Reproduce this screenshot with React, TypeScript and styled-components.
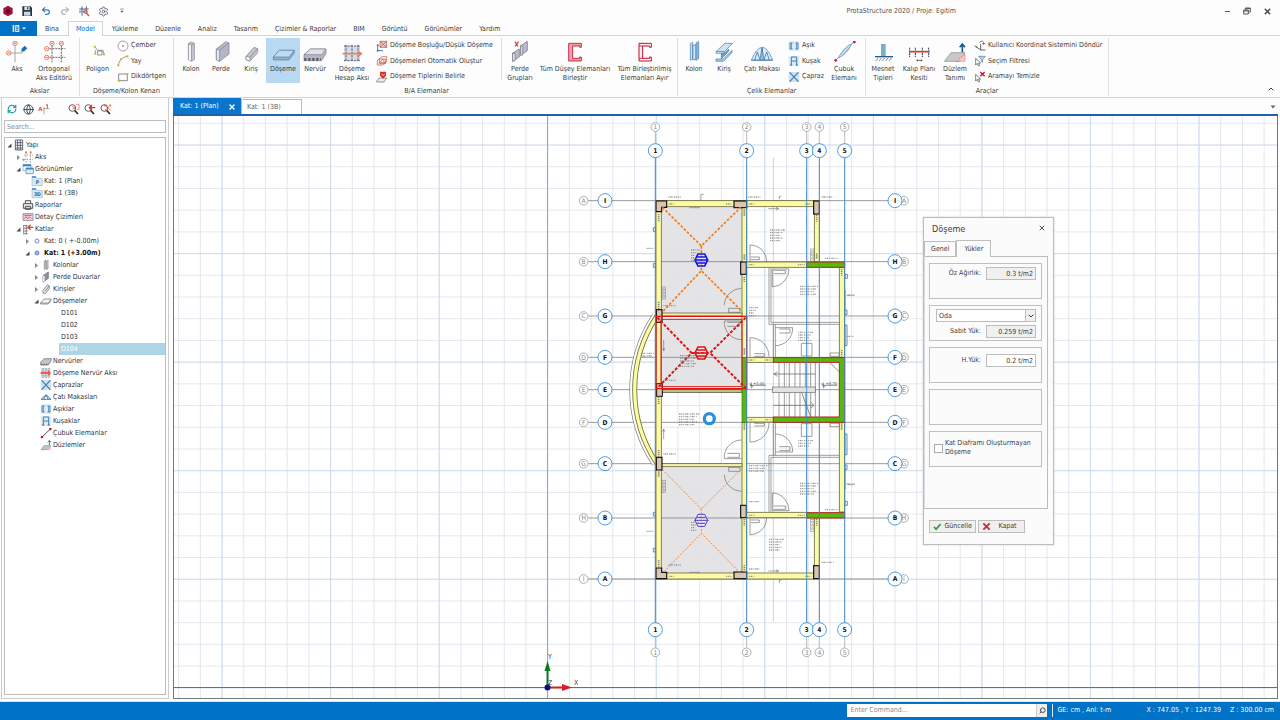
import React from 'react';
import styled, { createGlobalStyle, css } from 'styled-components';
import { Globe, Minus, Redo2, RefreshCw, Save, Search, Settings, Undo2, X, ChevronDown, ChevronUp, Copy } from 'lucide-react';

const BLUE = '#0072c6';
const RED = '#c8102e';
const STEEL = '#3f7bb0';

const GlobalStyle = createGlobalStyle`
  * { box-sizing: border-box; }
  body { margin: 0; background: #fff; }
  body, button, input, select {
    font-family: "DejaVu Sans Condensed", "DejaVu Sans", "Noto Sans", sans-serif;
    font-size: 7px;
    line-height: 9px;
    color: #3c3c3c;
  }
  button { border: 0; padding: 0; background: none; cursor: pointer; }
`;

const Page = styled.div`
  display: flex;
  flex-direction: column;
  min-height: 100vh;
  background: #fdfdfd;
`;

/* ---------- title bar ---------- */
const TitleBar = styled.header`
  display: flex;
  align-items: center;
  height: 21px;
  padding: 1px 6px 0 2px;
`;
const QuickBar = styled.div`
  display: flex;
  gap: 7px;
`;
const QuickButton = styled.button`
  display: grid;
  place-items: center;
  width: 12px;
  height: 12px;
`;
const WindowTitle = styled.h1`
  margin: 0 264px 0 auto;
  font-size: 7px;
  font-weight: 400;
  color: #555;
`;
const WindowButtons = styled.div`
  display: flex;
  gap: 6px;
`;
const WindowButton = styled.button`
  display: grid;
  place-items: center;
  width: 14px;
  height: 14px;
`;

/* ---------- ribbon ---------- */
const TabRow = styled.nav`
  display: flex;
  gap: 1px;
  height: 15px;
  border-bottom: 1px solid #d4d4d4;
`;
const FileButton = styled.button`
  display: flex;
  align-items: center;
  justify-content: center;
  gap: 2px;
  width: 37px;
  height: 15px;
  margin-right: -1px;
  background: ${BLUE};
`;
const RibbonTab = styled.button<{ $active?: boolean }>`
  height: 14px;
  padding: 3px 8px 0;
  ${(p) =>
    p.$active &&
    css`
      height: 15px;
      padding: 1px 7px 0;
      border: 1px solid #d4d4d4;
      border-bottom: 0;
      background: #fdfdfd;
      color: ${BLUE};
    `}
`;
const Ribbon = styled.div`
  position: relative;
  display: flex;
  height: 62px;
  padding: 2px 0 1px;
  border-bottom: 1px solid #d4d4d4;
`;
const Group = styled.section<{ $width: number; $indent?: number }>`
  display: flex;
  flex-direction: column;
  justify-content: space-between;
  width: ${(p) => p.$width}px;
  padding-left: ${(p) => p.$indent ?? 0}px;
  border-right: 1px solid #e0e0e0;
`;
const GroupBody = styled.div`
  display: flex;
  height: 45px;
`;
const GroupTitle = styled.h2`
  margin: 0;
  font-size: 7px;
  font-weight: 400;
  text-align: center;
`;
const ToolButton = styled.button<{ $width: number; $active?: boolean }>`
  display: flex;
  flex-direction: column;
  align-items: center;
  gap: 2px;
  width: ${(p) => p.$width}px;
  padding-top: 3px;
  white-space: pre;
  background: ${(p) => (p.$active ? '#b9d9f3' : 'none')};
`;
const ToolStack = styled.div`
  display: flex;
  flex-direction: column;
  justify-content: space-between;
  margin-left: 2px;
  padding-top: 1px;
`;
const StackButton = styled.button`
  display: flex;
  align-items: center;
  gap: 2px;
  height: 13px;
  white-space: nowrap;
`;
const Divider = styled.span`
  width: 1px;
  height: 42px;
  margin-left: auto;
  background: #e0e0e0;
`;
const CollapseButton = styled.button`
  margin: auto 5px 1px auto;
  height: 10px;
`;

/* ---------- work area ---------- */
const WorkArea = styled.main`
  display: flex;
  flex: 1;
  gap: 4px;
  padding: 0 2px 2px 1px;
`;
const SidePanel = styled.aside`
  display: flex;
  flex-direction: column;
  width: 168px;
  padding: 2px 2px 3px;
  border: 1px solid #ccc;
  border-top: 0;
`;
const SideTools = styled.div`
  display: flex;
  align-items: center;
  gap: 4px;
  height: 18px;
  margin-bottom: 2px;
  padding: 0 2px;
`;
const SideTool = styled.button<{ $first?: boolean }>`
  display: grid;
  place-items: center;
  width: 12px;
  height: 12px;
  margin-left: ${(p) => (p.$first ? 14 : 0)}px;
`;
const SearchBox = styled.input`
  width: 100%;
  height: 13px;
  padding: 0 2px;
  border: 1px solid #bdbdbd;
  &::placeholder { color: #8a8a8a; }
`;
const Tree = styled.ul`
  flex: 1;
  margin: 4px 0 0;
  padding: 1px 0 0;
  border: 1px solid #bdbdbd;
  background: #fff;
  list-style: none;
`;
const TreeRow = styled.li<{ $level: number }>`
  display: flex;
  align-items: center;
  height: 12px;
  padding-left: ${(p) => 1 + p.$level * 9}px;
`;
const TreeArrow = styled.span`
  display: grid;
  place-items: center;
  width: 7px;
`;
const TreeIcon = styled.span`
  display: grid;
  place-items: center;
  width: 12px;
`;
const TreeLabel = styled.span<{ $bold?: boolean; $selected?: boolean; $leaf?: boolean }>`
  padding-left: 1px;
  line-height: 12px;
  font-weight: ${(p) => (p.$bold ? 700 : 400)};
  color: ${(p) => (p.$bold ? '#111' : '#333')};
  ${(p) => p.$leaf && css`margin-left: 17px; padding-left: 2px; flex: 1;`}
  ${(p) => p.$selected && css`background: #add5e6; color: #fff;`}
`;

const Documents = styled.section`
  display: flex;
  flex: 1;
  flex-direction: column;
  min-width: 0;
`;
const DocumentTabs = styled.div`
  display: flex;
  align-items: flex-end;
  height: 18px;
  border-bottom: 2px solid #1f62ab;
`;
const DocumentTab = styled.button<{ $active?: boolean }>`
  display: flex;
  align-items: center;
  justify-content: space-between;
  width: ${(p) => (p.$active ? 68 : 61)}px;
  height: ${(p) => (p.$active ? 16 : 15)}px;
  padding: ${(p) => (p.$active ? '1px 5px 0 7px' : '1px 5px 0')};
  border: ${(p) => (p.$active ? 0 : '1px solid #bbb')};
  border-bottom: 0;
  background: ${(p) => (p.$active ? '#0a75cc' : '#fff')};
  color: ${(p) => (p.$active ? '#fff' : '#666')};
`;
const TabMenu = styled.button`
  width: 8px;
  height: 14px;
  margin-left: auto;
  margin-right: 1px;
`;
const Canvas = styled.div`
  position: relative;
  flex: 1;
  min-height: 583px;
  border: 1px solid #777;
  border-top: 0;
  background: #fff;
`;
const Drawing = styled.svg`
  position: absolute;
  inset: 0;
  width: 100%;
  height: 100%;
`;

/* ---------- slab dialog ---------- */
const Dialog = styled.section`
  position: absolute;
  left: 749px;
  top: 101px;
  width: 131px;
  padding-bottom: 11px;
  border: 1px solid #bdbdbd;
  background: #fbfbfb;
  box-shadow: 0 0 2px #ccc;
`;
const DialogHeader = styled.header`
  display: flex;
  align-items: center;
  justify-content: space-between;
  height: 22px;
  padding: 0 7px 0 8px;
`;
const DialogTitle = styled.h2`
  margin: 0;
  font-size: 9px;
  font-weight: 400;
`;
const DialogTabs = styled.div`
  display: flex;
  align-items: flex-end;
`;
const DialogTab = styled.button<{ $active?: boolean }>`
  height: ${(p) => (p.$active ? 17 : 15)}px;
  padding: ${(p) => (p.$active ? '0 7px' : '1px 6px 0')};
  margin-bottom: ${(p) => (p.$active ? -1 : 0)}px;
  border: 1px solid #bdbdbd;
  border-bottom: 0;
  background: #fbfbfb;
`;
const DialogPage = styled.div`
  display: grid;
  align-content: start;
  gap: 6px;
  height: 253px;
  margin-right: 5px;
  padding: 6px 5px 6px 4px;
  border: 1px solid #bdbdbd;
  border-left-color: #ddd;
`;
const GroupBox = styled.div`
  display: grid;
  align-content: start;
  gap: 3px;
  height: 36px;
  padding: 3px 5px 0 6px;
  border: 1px solid #c0c0c0;
`;
const Field = styled.label`
  display: flex;
  align-items: center;
  justify-content: flex-end;
  gap: 5px;
`;
const SpacedField = styled(Field)`
  padding-top: 3px;
`;
const ValueInput = styled.input<{ $locked?: boolean }>`
  width: 50px;
  height: 13px;
  padding: 0 2px;
  border: 1px solid #bdbdbd;
  background: ${(p) => (p.$locked ? '#f0f0f0' : '#fff')};
  text-align: right;
`;
const SelectShell = styled.div`
  position: relative;
  height: 13px;
`;
const UsageSelect = styled.select`
  appearance: none;
  display: block;
  width: 100%;
  height: 13px;
  padding: 1px 2px 0;
  border: 1px solid #bdbdbd;
  border-radius: 0;
  background: #fff;
`;
const SelectArrow = styled.span`
  position: absolute;
  inset: 0 0 0 auto;
  display: grid;
  place-items: center;
  width: 11px;
  border: 1px solid #bdbdbd;
  background: #f0f0f0;
  pointer-events: none;
`;
const CheckRow = styled.label`
  display: flex;
  align-items: center;
  gap: 2px;
  margin-left: -2px;
  padding-top: 4px;
`;
const CheckBox = styled.input`
  appearance: none;
  flex: none;
  width: 9px;
  height: 9px;
  margin: 0;
  border: 1px solid #aaa;
  background: #fff;
`;
const DialogActions = styled.div`
  display: flex;
  gap: 2px;
  padding: 11px 5px 0;
`;
const ActionButton = styled.button`
  display: flex;
  align-items: center;
  gap: 3px;
  width: 47px;
  height: 13px;
  padding: 0 3px;
  border: 1px solid #bdbdbd;
  background: #efefef;
`;
const ActionText = styled.span`
  flex: 1;
  text-align: center;
`;

/* ---------- status bar ---------- */
const StatusBar = styled.footer`
  display: flex;
  align-items: center;
  justify-content: flex-end;
  height: 19px;
  padding: 0 6px 1px 0;
  border-top: 1px solid #d7e8f6;
  background: ${BLUE};
  color: #fff;
`;
const CommandBox = styled.div`
  display: flex;
  width: 200px;
  height: 13px;
  background: #fff;
`;
const CommandInput = styled.input`
  flex: 1;
  padding: 0 3px;
  border: 0;
  &::placeholder { color: #8a8a8a; }
`;
const CommandButton = styled.button`
  display: grid;
  place-items: center;
  width: 11px;
  background: #eee;
  border-left: 1px solid #ccc;
  svg { transform: scaleX(-1); }
`;
const Units = styled.span`
  width: 85px;
  margin-left: 5px;
  padding-left: 4px;
  border-left: 1px solid #d7e8f6;
  line-height: 13px;
`;
const Coordinate = styled.span`
  margin-left: 9px;
`;
const TaskStrip = styled.div`
  display: flex;
  height: 1px;
  padding-left: 32px;
  background: #12335c;
`;
const TaskItem = styled.span<{ $width: number; $after?: number; $tone: string }>`
  width: ${(p) => p.$width}px;
  margin-right: ${(p) => p.$after ?? 0}px;
  background: ${(p) => p.$tone};
`;

/* ---------- icons ---------- */
type Art = { children: React.ReactNode };
const Big = ({ children }: Art) => (
  <svg width="24" height="22" viewBox="0 0 72 66" fill="none" strokeWidth="2" aria-hidden="true">{children}</svg>
);
const Small = ({ children }: Art) => (
  <svg width="12" height="12" viewBox="0 0 36 36" fill="none" strokeWidth="2" aria-hidden="true">{children}</svg>
);

const bubble = (x: number, y: number) => (
  <g key={`${x}-${y}`} stroke="#d9532f" strokeWidth="2.2"><circle cx={x} cy={y} r="6.5" /><path d={`M${x - 3} ${y + 2}l3-4 3 4`} /></g>
);
const AxisIcon = () => (
  <Big>
    <path d="M30 14v50M18 36h36" stroke="#a8a8a8" strokeWidth="3" />
    {bubble(30, 7)}{bubble(11, 36)}
    <path d="M47 34l3-11 9-9 8 8-9 9z" fill="#1f6db5" /><path d="M47 34l2-7 5 5z" fill="#e9b44c" />
  </Big>
);
const OrthoIcon = () => (
  <Big>
    <path d="M30 14v50M58 14v50M22 23h48M22 49h48" stroke="#444" strokeWidth="2.5" strokeDasharray="6 3" />
    {bubble(30, 7)}{bubble(58, 7)}{bubble(14, 23)}{bubble(14, 49)}
  </Big>
);
const node = (x: number, y: number) => <rect key={`${x}-${y}`} x={x - 3} y={y - 3} width="6" height="6" fill="#d8b32b" />;
const PolygonIcon = () => (
  <Big>
    <path d="M26 17l9 11 16 0 3 12M35 30h13v12H35zM28 40v-12" stroke="#666" />
    {node(26, 17)}{node(28, 38)}{node(54, 40)}
  </Big>
);
const ColumnIcon = () => (
  <Big><path d="M28 8l8-5 10 4v48l-8 6-10-5z" fill="#c9ccd8" stroke="#7a7d8c" /><path d="M33 12v46" stroke="#f4f4f8" strokeWidth="6" /><path d="M28 8l10 4 8-5M38 12v48" stroke="#7a7d8c" /></Big>
);
const WallIcon = () => (
  <Big><path d="M22 24L50 2l10 4v33L32 61l-10-5z" fill="#b4b7c6" stroke="#7a7d8c" /><path d="M22 24l10 4v33l-10-5z" fill="#e4e5ec" stroke="#7a7d8c" /><path d="M32 28L60 6" stroke="#7a7d8c" /></Big>
);
const BeamIcon = () => (
  <Big><path d="M21 46l24-27 11 4v12L33 60l-12-4z" fill="#c0c3d0" stroke="#7a7d8c" /><path d="M21 46l12 3v11l-12-4z" fill="#fff" stroke="#7a7d8c" /><path d="M33 49l23-26" stroke="#7a7d8c" /></Big>
);
const SlabIcon = () => (
  <Big><path d="M7 48l18-20h45v8L54 57H7z" fill="#8fb2d0" stroke="#5f7d98" /><path d="M7 48l18-20h45L54 48z" fill="#bcdcf0" stroke="#5f7d98" /></Big>
);
const RibIcon = () => (
  <Big><path d="M3 41l19-17h47v13L56 59H3z" fill="#b2b5c3" stroke="#7a7d8c" /><path d="M3 41l19-17h47L56 41z" fill="#dfe0e8" stroke="#7a7d8c" /><path d="M4 55h50" stroke="#4c4f5c" strokeWidth="8" strokeDasharray="6 6" /></Big>
);
const RibAxisIcon = () => (
  <Big><path d="M12 15h48v44H12z" fill="#d5dbe8" /><path d="M12 15h48M12 59h48M18 12v50M36 12v50M54 12v50" stroke="#51607a" strokeWidth="3" strokeDasharray="7 3" /><path d="M8 38h54" stroke="#ef7d4f" strokeWidth="5" /><path d="M56 29l12 9-12 9z" fill="#ef7d4f" /></Big>
);
const WallGroupIcon = () => (
  <Big><path d="M38 14L58 1v28L38 43z" fill="#b9bccb" stroke="#6a6d7c" /><path d="M38 14l6 2v26l-6 1z" fill="#eee" stroke="#6a6d7c" /><path d="M14 36l20-12v24L14 61z" fill="#b9bccb" stroke="#6a6d7c" /><path d="M14 36l7 2v21l-7 2z" fill="#eee" stroke="#6a6d7c" /><path d="M21 2l9 14M32 2L21 16" stroke="#e03a1e" strokeWidth="3.5" /></Big>
);
const MergeIcon = () => (
  <Big><path d="M17 7h38v12h-5v-4H29v37h21v-4h5v12H17z" fill="#e7a3ae" stroke={RED} strokeWidth="2.5" /></Big>
);
const SplitIcon = () => (
  <Big><path d="M18 7h37v12h-5v-4H29v37h21v-4h5v12H18z" fill="#fbeef0" stroke={RED} strokeWidth="3" /><path d="M18 15h11M18 52h11" stroke={RED} strokeWidth="2.5" /></Big>
);
const SteelColumnIcon = () => (
  <Big><path d="M25 8l7-4v50l-7 4zM32 12h10v44H32z" fill="#cfe2f2" stroke={STEEL} /><path d="M42 6l8-4v50l-8 6z" fill="#8fb9d9" stroke={STEEL} /></Big>
);
const SteelBeamIcon = () => (
  <Big>
    <path d="M12 32L38 7h24L37 32z" fill="#cfe2f2" stroke={STEEL} />
    <path d="M12 32h25v5H12z" fill="#eef6fc" stroke={STEEL} />
    <path d="M28 37v16l22-22V24L37 37z" fill="#6a9cc6" stroke={STEEL} />
    <path d="M12 54h22L60 28v7L34 61H12z" fill="#a9cbe5" stroke={STEEL} />
  </Big>
);
const TrussIcon = () => (
  <Big><path d="M4 57Q20 20 36 19t32 38z" fill="#dceaf6" stroke={STEEL} /><path d="M4 58h64M36 20v38M14 57l8-24 8 24 6-36 6 36 8-24 8 24" stroke={STEEL} strokeWidth="2.5" /></Big>
);
const RodIcon = () => (
  <Big><path d="M13 56L66 2" stroke={STEEL} strokeWidth="2.5" /><path d="M20 50C26 36 44 14 57 10 54 24 36 44 20 50z" fill="#a9cbe5" stroke={STEEL} /><path d="M24 46L54 13" stroke="#e6f1fa" strokeWidth="3" /><circle cx="11" cy="58" r="4" fill={RED} /><circle cx="67" cy="3" r="4" fill={RED} /></Big>
);
const SupportIcon = () => (
  <Big><path d="M30 9h14v36H30z" fill="#79adcf" /><path d="M12 47h54" stroke="#1f5f91" strokeWidth="4" /><path d="M14 60l8-10M24 60l8-10M34 60l8-10M44 60l8-10M54 60l8-10" stroke="#555" /></Big>
);
const FormworkIcon = () => (
  <Big><path d="M8 20v28M25 20v28M46 20v28M65 20v28" stroke="#1f3f70" strokeWidth="3" strokeDasharray="6 2" /><path d="M6 32h62" stroke="#e03a1e" strokeWidth="5" /><path d="M28 58h18M31 55v6M43 55v6" stroke="#333" /></Big>
);
const PlaneIcon = () => (
  <Big><path d="M4 61l20-26h42L52 61z" fill="#c9c9cc" stroke="#888" /><path d="M40 61l26-22v22z" fill="#f7c8bf" stroke="#e03a1e" strokeDasharray="3 3" /><path d="M58 34V12M50 19l8-10 8 10" stroke="#155a94" strokeWidth="5" /></Big>
);

const CircleIcon = () => <Small><circle cx="18" cy="18" r="15" stroke="#777" /><circle cx="18" cy="18" r="2.5" fill={RED} /></Small>;
const ArcIcon = () => <Small><path d="M4 32C6 16 16 6 32 4" stroke="#666" />{node(4, 31)}{node(31, 4)}{node(12, 13)}</Small>;
const RectIcon = () => <Small><path d="M5 9h26v20H5z" stroke="#555" />{node(5, 29)}{node(31, 9)}</Small>;
const OpeningIcon = () => <Small><path d="M12 4h20v18H12z" fill="#f2cfc8" stroke="#8a5a52" /><path d="M12 4l20 18M32 4L12 22" stroke="#c0392b" /><path d="M5 16v16h16" stroke={STEEL} strokeWidth="3" /><circle cx="5" cy="16" r="3" fill={STEEL} /><circle cx="5" cy="32" r="3" fill={STEEL} /></Small>;
const AutoSlabIcon = () => <Small><path d="M4 16L18 5h14v14L20 30H4z" stroke="#d9432f" /><path d="M10 12h18v14H10z" stroke="#7a4a44" /><path d="M12 22l8-9 6 10z" stroke="#d9432f" /></Small>;
const SlabTypeIcon = () => <Small><path d="M2 30l8-9h22l-8 12H2z" fill="#e9e9ee" stroke="#666" /><path d="M12 2h18v12l-9 9-9-9z" fill="#d9301f" /><path d="M16 8l5 6 5-6" stroke="#fff" /></Small>;
const PurlinIcon = () => <Small><path d="M2 3h32v30H2z" fill="#dcebf6" /><path d="M14 9H6v18h8M22 9h8v18h-8M10 9v18M26 9v18" stroke={STEEL} strokeWidth="2.5" /></Small>;
const GirtIcon = () => <Small><path d="M2 3h32v30H2z" fill="#dcebf6" /><path d="M10 31V6h16v25M10 18h16M6 30h7M23 30h7" stroke={STEEL} strokeWidth="3" /></Small>;
const BraceIcon = () => <Small><path d="M2 3h32v30H2z" fill="#cfe2f1" /><path d="M5 4l26 28M31 4L5 32" stroke={STEEL} strokeWidth="3.5" /></Small>;
const RotateUcsIcon = () => <Small><path d="M20 12v18H34M20 30L6 20" stroke="#444" strokeWidth="2.5" /><path d="M2 16l4 6 4-2" stroke="#444" /><path d="M17 8c2-6 12-6 12 2" stroke="#e03a1e" strokeWidth="3" /><path d="M24 9h10l-5 6z" fill="#e03a1e" /></Small>;
const cursor = <path d="M5 10v20l5-5 3 8 4-2-3-7h6z" fill="#fff" stroke="#444" />;
const FilterIcon = () => <Small>{cursor}<path d="M14 4h20l-8 9v9l-4-3v-6z" fill="#bcd8ee" stroke={STEEL} /></Small>;
const ClearIcon = () => <Small>{cursor}<path d="M19 3l13 13M32 3L19 16" stroke={RED} strokeWidth="4" /></Small>;

const BuildingIcon = () => <Small><path d="M7 3h22v30H7zM14 3v30M22 3v30M7 11h22M7 19h22M7 27h22" stroke="#444c5c" strokeWidth="2.5" /></Small>;
const GridTreeIcon = () => <Small><path d="M6 12h26M6 26h26M12 6v28M26 6v28" stroke="#666" strokeDasharray="4 4" /><circle cx="12" cy="4" r="3" fill="#e07a50" /><circle cx="26" cy="4" r="3" fill="#e07a50" /><circle cx="4" cy="26" r="3" fill="#e07a50" /></Small>;
const ViewsIcon = () => <Small><path d="M3 5h24v18H3z" fill="#fff" stroke="#5ba3d0" /><path d="M3 7h24" stroke="#3489c4" strokeWidth="6" /><path d="M12 15h22v17H12z" fill="#dcecf7" stroke="#3489c4" /><path d="M12 17h22" stroke="#3489c4" strokeWidth="5" /></Small>;
const ViewIcon = ({ mark }: { mark: string }) => <Small><path d="M3 5h12l3 5h16v22H3z" fill="#d6e6f2" stroke="#9fbdd3" /><path d="M3 6h12" stroke="#2a80c0" strokeWidth="4" /><text x="19" y="28" fontSize="15" fontWeight="700" textAnchor="middle" fill="#2a6aa0">{mark}</text></Small>;
const PrinterIcon = () => <Small><path d="M10 14V5h16v9M4 14h28v14H4zM10 22h16v9H10z" fill="#eee" stroke="#555" strokeWidth="3" /></Small>;
const DetailIcon = () => <Small><path d="M3 8h30v20H3z" fill="#f4dcdc" stroke="#667" /><path d="M7 23l5-6 5 6 5-6 6 6M7 13h22" stroke={RED} /></Small>;
const StoreysIcon = () => <Small><path d="M5 6v28M13 6v28M5 8h12M5 16h12M5 24h12M5 32h12" stroke="#555" /><path d="M34 13H22M26 6l-8 7 8 7" stroke="#e03a1e" strokeWidth="4" /></Small>;
const DotIcon = ({ full }: { full?: boolean }) => <Small><circle cx="18" cy="18" r="6" stroke="#6f86d6" strokeWidth="3" fill={full ? '#9fb0ea' : '#fff'} /></Small>;
const MiniColumn = () => <Small><path d="M13 6l4-3v26l-4 3zM20 6l4-3v26l-4 3z" fill="#e4e5ea" stroke="#777" /></Small>;
const MiniWall = () => <Small><path d="M9 14L25 3v19L9 34z" fill="#8d90a2" stroke="#5c5f70" /><path d="M9 14l5 2v15l-5 3z" fill="#e8e8ee" /></Small>;
const MiniBeam = () => <Small><path d="M9 22L22 5l6 3v9L16 32l-7-2z" fill="#dddfe6" stroke="#6a6d7c" /><path d="M16 24L27 9" stroke="#6a6d7c" /></Small>;
const MiniSlab = () => <Small><path d="M2 24l10-12h22L25 24zM2 24v3h23l9-12" fill="#f4f4f6" stroke="#666" /></Small>;
const MiniRib = () => <Small><path d="M2 22l10-11h22v5L25 30H2z" fill="#c2c4ce" stroke="#666" /><path d="M4 28h20" stroke="#555" strokeWidth="3" strokeDasharray="4 3" /></Small>;
const MiniRibAxis = () => <Small><path d="M3 4h28v28H3z" fill="#cdd6e4" /><path d="M9 3v30M18 3v30M27 3v30" stroke="#51607a" strokeDasharray="4 3" /><path d="M2 18h24" stroke="#ef5f3f" strokeWidth="6" /><path d="M24 10l10 8-10 8z" fill="#ef5f3f" /></Small>;
const MiniTruss = () => <Small><path d="M3 25L18 11l15 14zM11 25l7-13 7 13" stroke={STEEL} strokeWidth="3" /></Small>;
const MiniRod = () => <Small><path d="M6 30L30 7" stroke="#555" strokeWidth="3" /><circle cx="6" cy="30" r="4" fill={RED} /><circle cx="31" cy="6" r="4" fill={RED} /></Small>;
const MiniPlane = () => <Small><path d="M3 32l9-12h20l-6 12z" fill="#c4c4c8" stroke="#888" /><path d="M18 32l14-10v10z" fill="#f4b7aa" /><path d="M28 19V6M23 10l5-6 5 6" stroke={STEEL} strokeWidth="3" /></Small>;
const ZoomTool = ({ mark }: { mark: React.ReactNode }) => <Small><circle cx="13" cy="15" r="10" stroke="#444" strokeWidth="2.5" /><path d="M20 22l10 11" stroke="#333" strokeWidth="5" />{mark}</Small>;

/* ---------- data ---------- */
type Item = { level: number; label: string; icon?: React.ReactNode; arrow?: 'open' | 'closed'; bold?: boolean; selected?: boolean };
const tree: Item[] = [
  { level: 0, label: 'Yapı', icon: <BuildingIcon />, arrow: 'open' },
  { level: 1, label: 'Aks', icon: <GridTreeIcon />, arrow: 'closed' },
  { level: 1, label: 'Görünümler', icon: <ViewsIcon />, arrow: 'open' },
  { level: 2, label: 'Kat: 1 (Plan)', icon: <ViewIcon mark="P" /> },
  { level: 2, label: 'Kat: 1 (3B)', icon: <ViewIcon mark="3D" /> },
  { level: 1, label: 'Raporlar', icon: <PrinterIcon /> },
  { level: 1, label: 'Detay Çizimleri', icon: <DetailIcon /> },
  { level: 1, label: 'Katlar', icon: <StoreysIcon />, arrow: 'open' },
  { level: 2, label: 'Kat: 0 ( +-0.00m)', icon: <DotIcon />, arrow: 'closed' },
  { level: 2, label: 'Kat: 1 (+3.00m)', icon: <DotIcon full />, arrow: 'open', bold: true },
  { level: 3, label: 'Kolonlar', icon: <MiniColumn />, arrow: 'closed' },
  { level: 3, label: 'Perde Duvarlar', icon: <MiniWall />, arrow: 'closed' },
  { level: 3, label: 'Kirişler', icon: <MiniBeam />, arrow: 'closed' },
  { level: 3, label: 'Döşemeler', icon: <MiniSlab />, arrow: 'open' },
  { level: 4, label: 'D101' },
  { level: 4, label: 'D102' },
  { level: 4, label: 'D103' },
  { level: 4, label: 'D104', selected: true },
  { level: 3, label: 'Nervürler', icon: <MiniRib /> },
  { level: 3, label: 'Döşeme Nervür Aksı', icon: <MiniRibAxis /> },
  { level: 3, label: 'Çaprazlar', icon: <BraceIcon /> },
  { level: 3, label: 'Çatı Makasları', icon: <MiniTruss /> },
  { level: 3, label: 'Aşıklar', icon: <PurlinIcon /> },
  { level: 3, label: 'Kuşaklar', icon: <GirtIcon /> },
  { level: 3, label: 'Çubuk Elemanlar', icon: <MiniRod /> },
  { level: 3, label: 'Düzlemler', icon: <MiniPlane /> },
];
const ribbonTabs = ['Bina', 'Model', 'Yükleme', 'Düzenle', 'Analiz', 'Tasarım', 'Çizimler & Raporlar', 'BIM', 'Görüntü', 'Görünümler', 'Yardım'];

const Tool = ({ width, label, active, children }: { width: number; label: string; active?: boolean; children: React.ReactNode }) => (
  <ToolButton $width={width} $active={active}>{children}<span>{label}</span></ToolButton>
);
const Stacked = ({ label, children }: { label: string; children: React.ReactNode }) => (
  <StackButton>{children}<span>{label}</span></StackButton>
);

/* ---------- floor plan; three drawing units to a pixel ---------- */
const columns: [string, number][] = [['1', 256], ['2', 530], ['3', 710], ['4', 748], ['5', 824]];
const rows: [string, string, number][] = [
  ['I', 'A', 257], ['H', 'B', 440], ['G', 'C', 603], ['F', 'D', 727], ['E', 'E', 824], ['D', 'F', 922], ['C', 'G', 1046], ['B', 'H', 1209], ['A', 'I', 1392],
];
const MIRROR = 'translate(0 1649) scale(1 -1)';

const Bubble = ({ x, y, text }: { x: number; y: number; text: string }) => (
  <g>
    <circle cx={x} cy={y} r="21" fill="#fff" fillOpacity="0.85" stroke="#2a8ad8" strokeWidth="2.5" />
    <text x={x} y={y + 7} fontSize="20" fontWeight="700" textAnchor="middle" fill="#111">{text}</text>
  </g>
);
const Ghost = ({ x, y, text }: { x: number; y: number; text: string }) => (
  <g>
    <circle cx={x} cy={y} r="13" fill="#fff" stroke="#8a8a8a" strokeWidth="2" />
    <text x={x} y={y + 7} fontSize="20" textAnchor="middle" fill="#888">{text}</text>
  </g>
);
const Scribble = ({ x, y, w, n = 1 }: { x: number; y: number; w: number; n?: number }) => (
  <path
    d={Array.from({ length: n }, (_, i) => `M${x} ${y + i * 8}h${w - ((i * 7) % 15)}`).join('')}
    stroke="#7d7d7d" strokeWidth="4" strokeDasharray="3 2 5 2 2 3" opacity="0.75"
  />
);
const Shaft = ({ x, y }: { x: number; y: number }) => (
  <g stroke="#777" strokeWidth="1.5"><rect x={x} y={y} width="10" height="36" /><circle cx={x + 5} cy={y + 8} r="3" /><circle cx={x + 5} cy={y + 18} r="3" /><circle cx={x + 5} cy={y + 28} r="3" /></g>
);
const HalfLines = () => (
  <g stroke="#6c6c6c" strokeWidth="2">
    <path d="M540 390v52M540 390a50 50 0 0 1 50 50M542 434h26v-8h-26M597 458v170M603 458v164M597 628h211M603 622h205M610 628v99M616 628v99" />
    <path d="M657 462a52 52 0 0 1-50 53M657 462h-50v53M612 466h34v10h-34M463 570a52 52 0 0 1 51-50M476 592h34v-12h-34z" />
    <path d="M463 618a52 52 0 0 0 51 56M463 618h51M472 622h36v12h-36M668 638a52 52 0 0 1-52 54M668 638h-52M628 642h32v12h-32" />
    <path d="M540 668v57M540 668a56 56 0 0 1 57 57M553 716h30v8h-30M694 685h32v38h-32zM780 714h28v10h-28z" />
    <path d="M228 400h22M832 540h20M826 525v60" strokeWidth="1.5" />
    <path d="M250 338h7v11h-7zM250 446h7v11h-7zM825 478h7v12h-7zM825 585h6v14h-6zM825 630h6v62h-6z" stroke={STEEL} strokeWidth="2.5" />
  </g>
);
const Walls = () => (
  <g stroke="#6e6e3c" strokeWidth="2.5" fill="#fbfba6">
    <rect x="258" y="257" width="474" height="18" />
    <rect x="258" y="257" width="16" height="570" />
    <rect x="516" y="257" width="14" height="470" />
    <rect x="733" y="258" width="15" height="182" />
    <rect x="530" y="441" width="180" height="16" />
    <rect x="808" y="458" width="16" height="270" />
    <rect x="530" y="728" width="80" height="14" />
    <rect x="274" y="594" width="242" height="9" fill="#f3f3b4" />
  </g>
);
const Columns = () => (
  <g stroke="#111" strokeWidth="3.5" fill="#dcc4b0">
    <path d="M258 258h32v19h-15v13h-17z" />
    <rect x="492" y="258" width="38" height="20" />
    <rect x="731" y="258" width="17" height="39" />
    <rect x="512" y="441" width="17" height="37" />
    <rect x="259" y="584" width="17" height="38" />
  </g>
);
const Seal = ({ y, color, width }: { y: number; color: string; width: number }) => (
  <path d={`M375 ${y}l9-18h20l9 18-9 18h-20zM373 ${y}h42M382 ${y - 9}h24M382 ${y + 9}h24`} stroke={color} strokeWidth={width} fill="#fff" fillOpacity="0.3" />
);

const FloorPlan = () => (
  <Drawing fill="none" role="img" aria-label="Kat: 1 (Plan)">
    <defs>
      <pattern id="minor" patternUnits="userSpaceOnUse" x="373.2" y="571.3" width="21.71" height="21.71">
        <path d="M0 0H22M0 0V22" stroke="#dde1ea" strokeWidth="1.6" />
      </pattern>
      <pattern id="major" patternUnits="userSpaceOnUse" x="373.2" y="571.3" width="108.55" height="108.55">
        <path d="M0 0H109M0 0V109" stroke="#c6d9ee" strokeWidth="1.6" />
      </pattern>
    </defs>
    <rect width="100%" height="100%" fill="url(#minor)" />
    <rect width="100%" height="100%" fill="url(#major)" />
    <path d="M373.5 0v2000" stroke="#8cb58c" />
    <path d="M0 571.5h4000" stroke="#b85050" />
    <g strokeWidth="2">
      <path d="M373.5 571V553" stroke="#0b7a1b" /><path d="M370.5 555l3-10 3 10z" fill="#0b7a1b" />
      <path d="M373 571.5h17" stroke="#d81e1e" /><path d="M388 568l10 3.5-10 3.5z" fill="#d81e1e" />
      <circle cx="373.5" cy="571.5" r="3" fill="#0a0a8c" />
    </g>
    <g fontSize="7" fill="#444"><text x="374" y="543">Y</text><text x="374" y="569">Z</text><text x="400" y="569">X</text></g>

    <g transform="translate(396 -1) scale(0.33333)">
      <g fill="#e2e2e5" fillOpacity="0.92">
        <path d="M274 275h242v320H274zM274 613h242v204H274zM274 1055h242v320H274z" />
      </g>
      <g stroke="#999" strokeWidth="2">
        <path d="M610 128v1392" stroke="#bbb" />
        <path d={rows.map(([, , y]) => `M55 ${y}H990`).join('')} stroke="#858585" strokeWidth="2.5" />
        <path d={columns.map(([, x]) => `M${x} 50V1598`).join('')} />
      </g>
      <HalfLines />
      <g transform={MIRROR}><HalfLines /></g>

      <path d="M255 603A400 400 0 0 0 255 1046" stroke="#777" strokeWidth="20" />
      <path d="M255 603A400 400 0 0 0 255 1046" stroke="#fff" strokeWidth="16" />
      <path d="M261 603A400 400 0 0 0 261 1046" stroke="#6e6e3c" strokeWidth="15" />
      <path d="M261 603A400 400 0 0 0 261 1046" stroke="#fbfba6" strokeWidth="10" />

      <Walls />
      <g transform={MIRROR}><Walls /></g>
      <g fill="#c9c98c" stroke="#4e4e34" strokeWidth="2.5"><rect x="274" y="824" width="242" height="8" /></g>

      <g stroke="#6c6c6c" strokeWidth="2">
        <path d="M627 743v162M643 743v162M658 743v162M675 743v162M690 743v162M706 743v162M722 743v162M736 743v162" />
        <path d="M610 777h126M622 770l-10 7 10 7M610 871h120M722 862l10 9-10 9M540 811h48M758 811h44M544 802v18M760 802v18M538 806l12 10M754 806l12 10M695 833l27 72M780 743l28 28" stroke="#555" />
        <rect x="607" y="816" width="129" height="17" fill="#e2e2e2" />
      </g>

      <g fill="#58b80c" stroke="#b02020" strokeWidth="3">
        <rect x="710" y="441" width="114" height="16" />
        <rect x="710" y="1193" width="114" height="16" />
        <path d="M610 728h214v194H610v-16h198V742H610z" />
      </g>
      <rect x="516" y="728" width="14" height="194" fill="#58b80c" stroke="#3e7a14" strokeWidth="2" />

      <Columns />
      <g transform={MIRROR}><Columns /></g>
      <rect x="260" y="806" width="17" height="38" stroke="#111" strokeWidth="3" fill="#dcc4b0" />

      <g stroke="#ef7a1a" strokeWidth="5" strokeDasharray="8 5">
        <path d="M277 277l117 116 118-116M394 393v74M280 588l114-121 118 118" />
      </g>
      <g stroke="#f08a3a" strokeWidth="3" strokeDasharray="6 4">
        <path d="M277 1064l117 118 124-124M394 1182v73M282 1370l112-115 115 117" />
      </g>
      <g stroke="#dc1414">
        <path d="M258 604h272v217H258z" strokeWidth="4" />
        <path d="M273 613h243v202H273z" strokeWidth="3" />
        <path d="M262 608l103 106-103 105M527 608L420 714l107 105M365 714h55" strokeWidth="6" strokeDasharray="9 5" />
      </g>
      <Seal y={435} color="#1010e0" width={5} />
      <Seal y={714} color="#e01212" width={5} />
      <Seal y={1216} color="#4a3ad0" width={3} />

      <g>
        <Scribble x={600} y={345} w={45} n={5} /><Scribble x={363} y={405} w={26} n={5} /><Scribble x={690} y={514} w={55} n={4} />
        <Scribble x={537} y={578} w={28} n={4} /><Scribble x={330} y={722} w={55} n={5} /><Scribble x={327} y={897} w={60} n={5} />
        <Scribble x={685} y={652} w={45} n={4} /><Scribble x={685} y={977} w={45} n={3} /><Scribble x={537} y={1052} w={58} n={3} />
        <Scribble x={690} y={1105} w={55} n={5} /><Scribble x={597} y={1273} w={45} n={5} /><Scribble x={363} y={1222} w={24} n={4} />
        <Scribble x={295} y={246} w={38} /><Scribble x={535} y={246} w={36} /><Scribble x={755} y={246} w={35} /><Scribble x={765} y={430} w={40} />
        <Scribble x={215} y={715} w={38} n={2} /><Scribble x={280} y={572} w={38} /><Scribble x={280} y={796} w={38} /><Scribble x={280} y={1017} w={38} />
        <Scribble x={537} y={1160} w={34} /><Scribble x={765} y={1184} w={40} /><Scribble x={755} y={1342} w={36} /><Scribble x={537} y={1362} w={34} />
        <Scribble x={295} y={1350} w={38} /><Scribble x={830} y={541} w={24} /><Scribble x={830} y={664} w={20} /><Scribble x={830} y={1107} w={24} />
        <Scribble x={296} y={267} w={18} /><Scribble x={468} y={267} w={18} /><Scribble x={536} y={267} w={18} /><Scribble x={706} y={267} w={18} />
        <Scribble x={296} y={1384} w={18} /><Scribble x={468} y={1384} w={18} /><Scribble x={536} y={1384} w={18} /><Scribble x={706} y={1384} w={18} />
        <Scribble x={536} y={449} w={18} /><Scribble x={684} y={449} w={20} /><Scribble x={536} y={735} w={18} /><Scribble x={584} y={735} w={20} />
        <Scribble x={536} y={914} w={18} /><Scribble x={584} y={914} w={20} /><Scribble x={536} y={1201} w={18} /><Scribble x={684} y={1201} w={20} />
      </g>
      <path
        d="M266 297v22M523 283v20M523 418v18M740 300v20M740 415v18M523 485v18M815 462v20M266 560v22M266 845v24M266 1005v20M266 1066v20M523 925v20M815 925v20M523 1212v20M740 1212v20M523 1350v20M266 1335v20M523 700v20M815 705v20"
        stroke="#888" strokeWidth="5" strokeDasharray="4 2"
      />
      <Shaft x={722} y={402} /><Shaft x={722} y={1213} /><Shaft x={276} y={516} /><Shaft x={276} y={1097} />
      <g stroke="#777" strokeWidth="2">
        <path d="M390 278h-32M595 281h30M618 277l8 4-8 4M595 1368h30M618 1364l8 4-8 4M390 1372h-32M281 675v32M278 700l3 8 3-8M281 942v30M278 950l3-8 3 8M393 258v-20h8M628 252v-8h6M628 1404v-8h6" />
      </g>
      <g fontSize="12" fill="#555"><text x="550" y="809">+3.00</text><text x="768" y="809">+5.70</text></g>

      <path d={columns.map(([, x]) => `M${x} 128V1523`).join('')} stroke="#3a8ad0" strokeWidth="2.5" />
      {columns.map(([n, x]) => (
        <g key={n}><Ghost x={x} y={36} text={n} /><Ghost x={x} y={1612} text={n} /><Bubble x={x} y={107} text={n} /><Bubble x={x} y={1544} text={n} /></g>
      ))}
      {rows.map(([n, g, y]) => (
        <g key={n}><Ghost x={41} y={y} text={g} /><Ghost x={1002} y={y} text={g} /><Bubble x={105} y={y} text={n} /><Bubble x={975} y={y} text={n} /></g>
      ))}
      <circle cx="418" cy="911" r="15" stroke="#2b8fdd" strokeWidth="10" fill="#fff" />
    </g>
  </Drawing>
);

export default function App() {
  return (
    <Page>
      <GlobalStyle />
      <TitleBar>
        <QuickBar>
          <QuickButton aria-label="ProtaStructure"><svg width="12" height="12" viewBox="0 0 36 36"><path d="M18 2l14 8v16l-14 8-14-8V10z" fill="#a5123c" /><path d="M18 11l6 4v7l-6 4-6-4v-7z" fill="#5e0b25" /></svg></QuickButton>
          <QuickButton aria-label="Kaydet"><Small><path d="M4 4h25l4 4v25H4z" fill="#2b3440" /><path d="M10 5h16v10H10z" fill="#dfe8f0" /><path d="M9 20h19v12H9z" fill="#c6d8e6" /><path d="M20 7v6" stroke="#2b3440" strokeWidth="4" /></Small></QuickButton>
          <QuickButton aria-label="Geri Al"><Undo2 size={10} color="#3f78b8" strokeWidth={3} /></QuickButton>
          <QuickButton aria-label="Yinele"><Redo2 size={10} color="#b5b5b5" strokeWidth={3} /></QuickButton>
          <QuickButton aria-label="Akslar"><Small><path d="M4 12h28M12 4v28M25 4v22" stroke="#567" strokeWidth="3" /><path d="M3 20h26" stroke="#7aa6d0" strokeWidth="6" /><circle cx="22" cy="20" r="5" stroke="#d9432f" strokeWidth="2.5" /><path d="M26 25l7 8" stroke="#d9432f" strokeWidth="4" /></Small></QuickButton>
          <QuickButton aria-label="Ayarlar"><Settings size={11} color="#667" /></QuickButton>
          <QuickButton aria-label="Diğer"><svg width="6" height="6" viewBox="0 0 18 18"><path d="M4 3h10" stroke="#666" strokeWidth="2" /><path d="M4 8h10l-5 6z" fill="#555" /></svg></QuickButton>
        </QuickBar>
        <WindowTitle>ProtaStructure 2020 / Proje: Egitim</WindowTitle>
        <WindowButtons>
          <WindowButton aria-label="Simge durumu"><Minus size={7} strokeWidth={4} color="#555" /></WindowButton>
          <WindowButton aria-label="Önceki boyut"><svg width="8" height="8" viewBox="0 0 24 24" fill="none" stroke="#555" strokeWidth="3"><path d="M2 9h14v12H2zM2 12h14M7 8V3h15v12h-5M7 5h15" /></svg></WindowButton>
          <WindowButton aria-label="Kapat"><X size={9} strokeWidth={4} color="#444" /></WindowButton>
        </WindowButtons>
      </TitleBar>

      <TabRow>
        <FileButton aria-label="Dosya">
          <svg width="8" height="9" viewBox="0 0 24 27"><path d="M2 3h20v21H2z" fill="#d6e9f8" /><path d="M8 3v21M12 9h7M12 14h7M12 19h7" stroke="#0f5a9a" strokeWidth="2.5" /></svg>
          <svg width="4" height="3" viewBox="0 0 8 6"><path d="M0 1h8L4 5z" fill="#fff" /></svg>
        </FileButton>
        {ribbonTabs.map((t) => <RibbonTab key={t} $active={t === 'Model'}>{t}</RibbonTab>)}
      </TabRow>

      <Ribbon>
        <Group $width={80}>
          <GroupBody>
            <Tool width={34} label="Aks"><AxisIcon /></Tool>
            <Tool width={40} label={'Ortogonal\nAks Editörü'}><OrthoIcon /></Tool>
          </GroupBody>
          <GroupTitle>Akslar</GroupTitle>
        </Group>
        <Group $width={94}>
          <GroupBody>
            <Tool width={35} label="Poligon"><PolygonIcon /></Tool>
            <ToolStack>
              <Stacked label="Çember"><CircleIcon /></Stacked>
              <Stacked label="Yay"><ArcIcon /></Stacked>
              <Stacked label="Dikdörtgen"><RectIcon /></Stacked>
            </ToolStack>
          </GroupBody>
          <GroupTitle>Döşeme/Kolon Kenarı</GroupTitle>
        </Group>
        <Group $width={504} $indent={2}>
          <GroupBody>
            <Tool width={30} label="Kolon"><ColumnIcon /></Tool>
            <Tool width={30} label="Perde"><WallIcon /></Tool>
            <Tool width={30} label="Kiriş"><BeamIcon /></Tool>
            <Tool width={34} label="Döşeme" active><SlabIcon /></Tool>
            <Tool width={30} label="Nervür"><RibIcon /></Tool>
            <Tool width={44} label={'Döşeme\nHesap Aksı'}><RibAxisIcon /></Tool>
            <ToolStack>
              <Stacked label="Döşeme Boşluğu/Düşük Döşeme"><OpeningIcon /></Stacked>
              <Stacked label="Döşemeleri Otomatik Oluştur"><AutoSlabIcon /></Stacked>
              <Stacked label="Döşeme Tiplerini Belirle"><SlabTypeIcon /></Stacked>
            </ToolStack>
            <Divider />
            <Tool width={36} label={'Perde\nGrupları'}><WallGroupIcon /></Tool>
            <Tool width={74} label={'Tüm Düşey Elemanları\nBirleştir'}><MergeIcon /></Tool>
            <Tool width={65} label={'Tüm Birleştirilmiş\nElemanları Ayır'}><SplitIcon /></Tool>
          </GroupBody>
          <GroupTitle>B/A Elemanlar</GroupTitle>
        </Group>
        <Group $width={188}>
          <GroupBody>
            <Tool width={32} label="Kolon"><SteelColumnIcon /></Tool>
            <Tool width={28} label="Kiriş"><SteelBeamIcon /></Tool>
            <Tool width={48} label="Çatı Makası"><TrussIcon /></Tool>
            <ToolStack>
              <Stacked label="Aşık"><PurlinIcon /></Stacked>
              <Stacked label="Kuşak"><GirtIcon /></Stacked>
              <Stacked label="Çapraz"><BraceIcon /></Stacked>
            </ToolStack>
            <Tool width={40} label={'Çubuk\nElemanı'}><RodIcon /></Tool>
          </GroupBody>
          <GroupTitle>Çelik Elemanlar</GroupTitle>
        </Group>
        <Group $width={243}>
          <GroupBody>
            <Tool width={34} label={'Mesnet\nTipleri'}><SupportIcon /></Tool>
            <Tool width={38} label={'Kalıp Planı\nKesiti'}><FormworkIcon /></Tool>
            <Tool width={34} label={'Düzlem\nTanımı'}><PlaneIcon /></Tool>
            <ToolStack>
              <Stacked label="Kullanıcı Koordinat Sistemini Döndür"><RotateUcsIcon /></Stacked>
              <Stacked label="Seçim Filtresi"><FilterIcon /></Stacked>
              <Stacked label="Aramayı Temizle"><ClearIcon /></Stacked>
            </ToolStack>
          </GroupBody>
          <GroupTitle>Araçlar</GroupTitle>
        </Group>
        <CollapseButton aria-label="Şeridi daralt"><ChevronUp size={8} strokeWidth={3} /></CollapseButton>
      </Ribbon>

      <WorkArea>
        <SidePanel>
          <SideTools>
            <SideTool aria-label="Yenile"><RefreshCw size={10} color="#1fa39a" strokeWidth={3} /></SideTool>
            <SideTool aria-label="Dünya"><Globe size={11} color="#345" /></SideTool>
            <SideTool aria-label="Aks adı"><Small><path d="M2 24l5-12 5 12M4 20h6M28 4v12M24 7l4-3" stroke="#e0532f" strokeWidth="3" /><path d="M18 12v22M14 17h20" stroke="#888" /></Small></SideTool>
            <SideTool $first aria-label="Yakınlaştır"><ZoomTool mark={<path d="M12 9l8 8M20 10v7h-7M24 4h9v16h-6" stroke="#c9603f" />} /></SideTool>
            <SideTool aria-label="Önceki"><ZoomTool mark={<path d="M34 14H18M24 6l-8 8 8 8" stroke="#e03a1e" strokeWidth="4" />} /></SideTool>
            <SideTool aria-label="Tümü"><ZoomTool mark={<path d="M14 6l18 16M32 6L14 22M14 11V6h5M32 11V6h-5" stroke="#e0532f" />} /></SideTool>
          </SideTools>
          <SearchBox aria-label="Ara" placeholder="Search..." />
          <Tree>
            {tree.map((item) => (
              <TreeRow key={item.label} $level={item.level}>
                {item.icon && (
                  <>
                    <TreeArrow>
                      {item.arrow && <svg width="5" height="5" viewBox="0 0 10 10"><path d={item.arrow === 'open' ? 'M9 1v8H1z' : 'M2 0l6 5-6 5z'} fill={item.arrow === 'open' ? '#444' : '#888'} /></svg>}
                    </TreeArrow>
                    <TreeIcon>{item.icon}</TreeIcon>
                  </>
                )}
                <TreeLabel $bold={item.bold} $selected={item.selected} $leaf={!item.icon}>{item.label}</TreeLabel>
              </TreeRow>
            ))}
          </Tree>
        </SidePanel>

        <Documents>
          <DocumentTabs>
            <DocumentTab $active>Kat: 1 (Plan)<X size={8} strokeWidth={4} /></DocumentTab>
            <DocumentTab>Kat: 1 (3B)</DocumentTab>
            <TabMenu aria-label="Sekmeler"><svg width="6" height="4" viewBox="0 0 12 8"><path d="M1 1h10L6 7z" fill="#666" /></svg></TabMenu>
          </DocumentTabs>
          <Canvas>
            <FloorPlan />
            <Dialog aria-label="Döşeme">
              <DialogHeader>
                <DialogTitle>Döşeme</DialogTitle>
                <button aria-label="Kapat"><X size={8} strokeWidth={3} color="#555" /></button>
              </DialogHeader>
              <DialogTabs>
                <DialogTab>Genel</DialogTab>
                <DialogTab $active>Yükler</DialogTab>
              </DialogTabs>
              <DialogPage>
                <GroupBox><Field>Öz Ağırlık:<ValueInput $locked readOnly defaultValue="0.3 t/m2" /></Field></GroupBox>
                <GroupBox>
                  <SelectShell>
                    <UsageSelect aria-label="Kullanım"><option>Oda</option></UsageSelect>
                    <SelectArrow><ChevronDown size={8} strokeWidth={3} /></SelectArrow>
                  </SelectShell>
                  <Field>Sabit Yük:<ValueInput $locked readOnly defaultValue="0.259 t/m2" /></Field>
                </GroupBox>
                <GroupBox><SpacedField>H.Yük:<ValueInput defaultValue="0.2 t/m2" /></SpacedField></GroupBox>
                <GroupBox />
                <GroupBox><CheckRow><CheckBox type="checkbox" />Kat Diaframı Oluşturmayan Döşeme</CheckRow></GroupBox>
              </DialogPage>
              <DialogActions>
                <ActionButton>
                  <svg width="10" height="9" viewBox="0 0 30 27"><path d="M3 15l8 8L27 5" fill="none" stroke="#3f9a4a" strokeWidth="6" /></svg>
                  <ActionText>Güncelle</ActionText>
                </ActionButton>
                <ActionButton>
                  <svg width="9" height="9" viewBox="0 0 27 27"><path d="M4 4l19 19M23 4L4 23" stroke="#c8323c" strokeWidth="6" /></svg>
                  <ActionText>Kapat</ActionText>
                </ActionButton>
              </DialogActions>
            </Dialog>
          </Canvas>
        </Documents>
      </WorkArea>

      <StatusBar>
        <CommandBox>
          <CommandInput aria-label="Komut" placeholder="Enter Command..." />
          <CommandButton aria-label="Ara"><Search size={7} strokeWidth={3} /></CommandButton>
        </CommandBox>
        <Units>GE: cm , Anl: t-m</Units>
        <Coordinate>X : 747.05 , Y : 1247.39</Coordinate>
        <Coordinate>Z : 300.00 cm</Coordinate>
      </StatusBar>
      <TaskStrip>
        <TaskItem $width={229} $after={229} $tone="#e6f1fa" />
        <TaskItem $width={32} $tone="#3d6a98" />
      </TaskStrip>
    </Page>
  );
}
